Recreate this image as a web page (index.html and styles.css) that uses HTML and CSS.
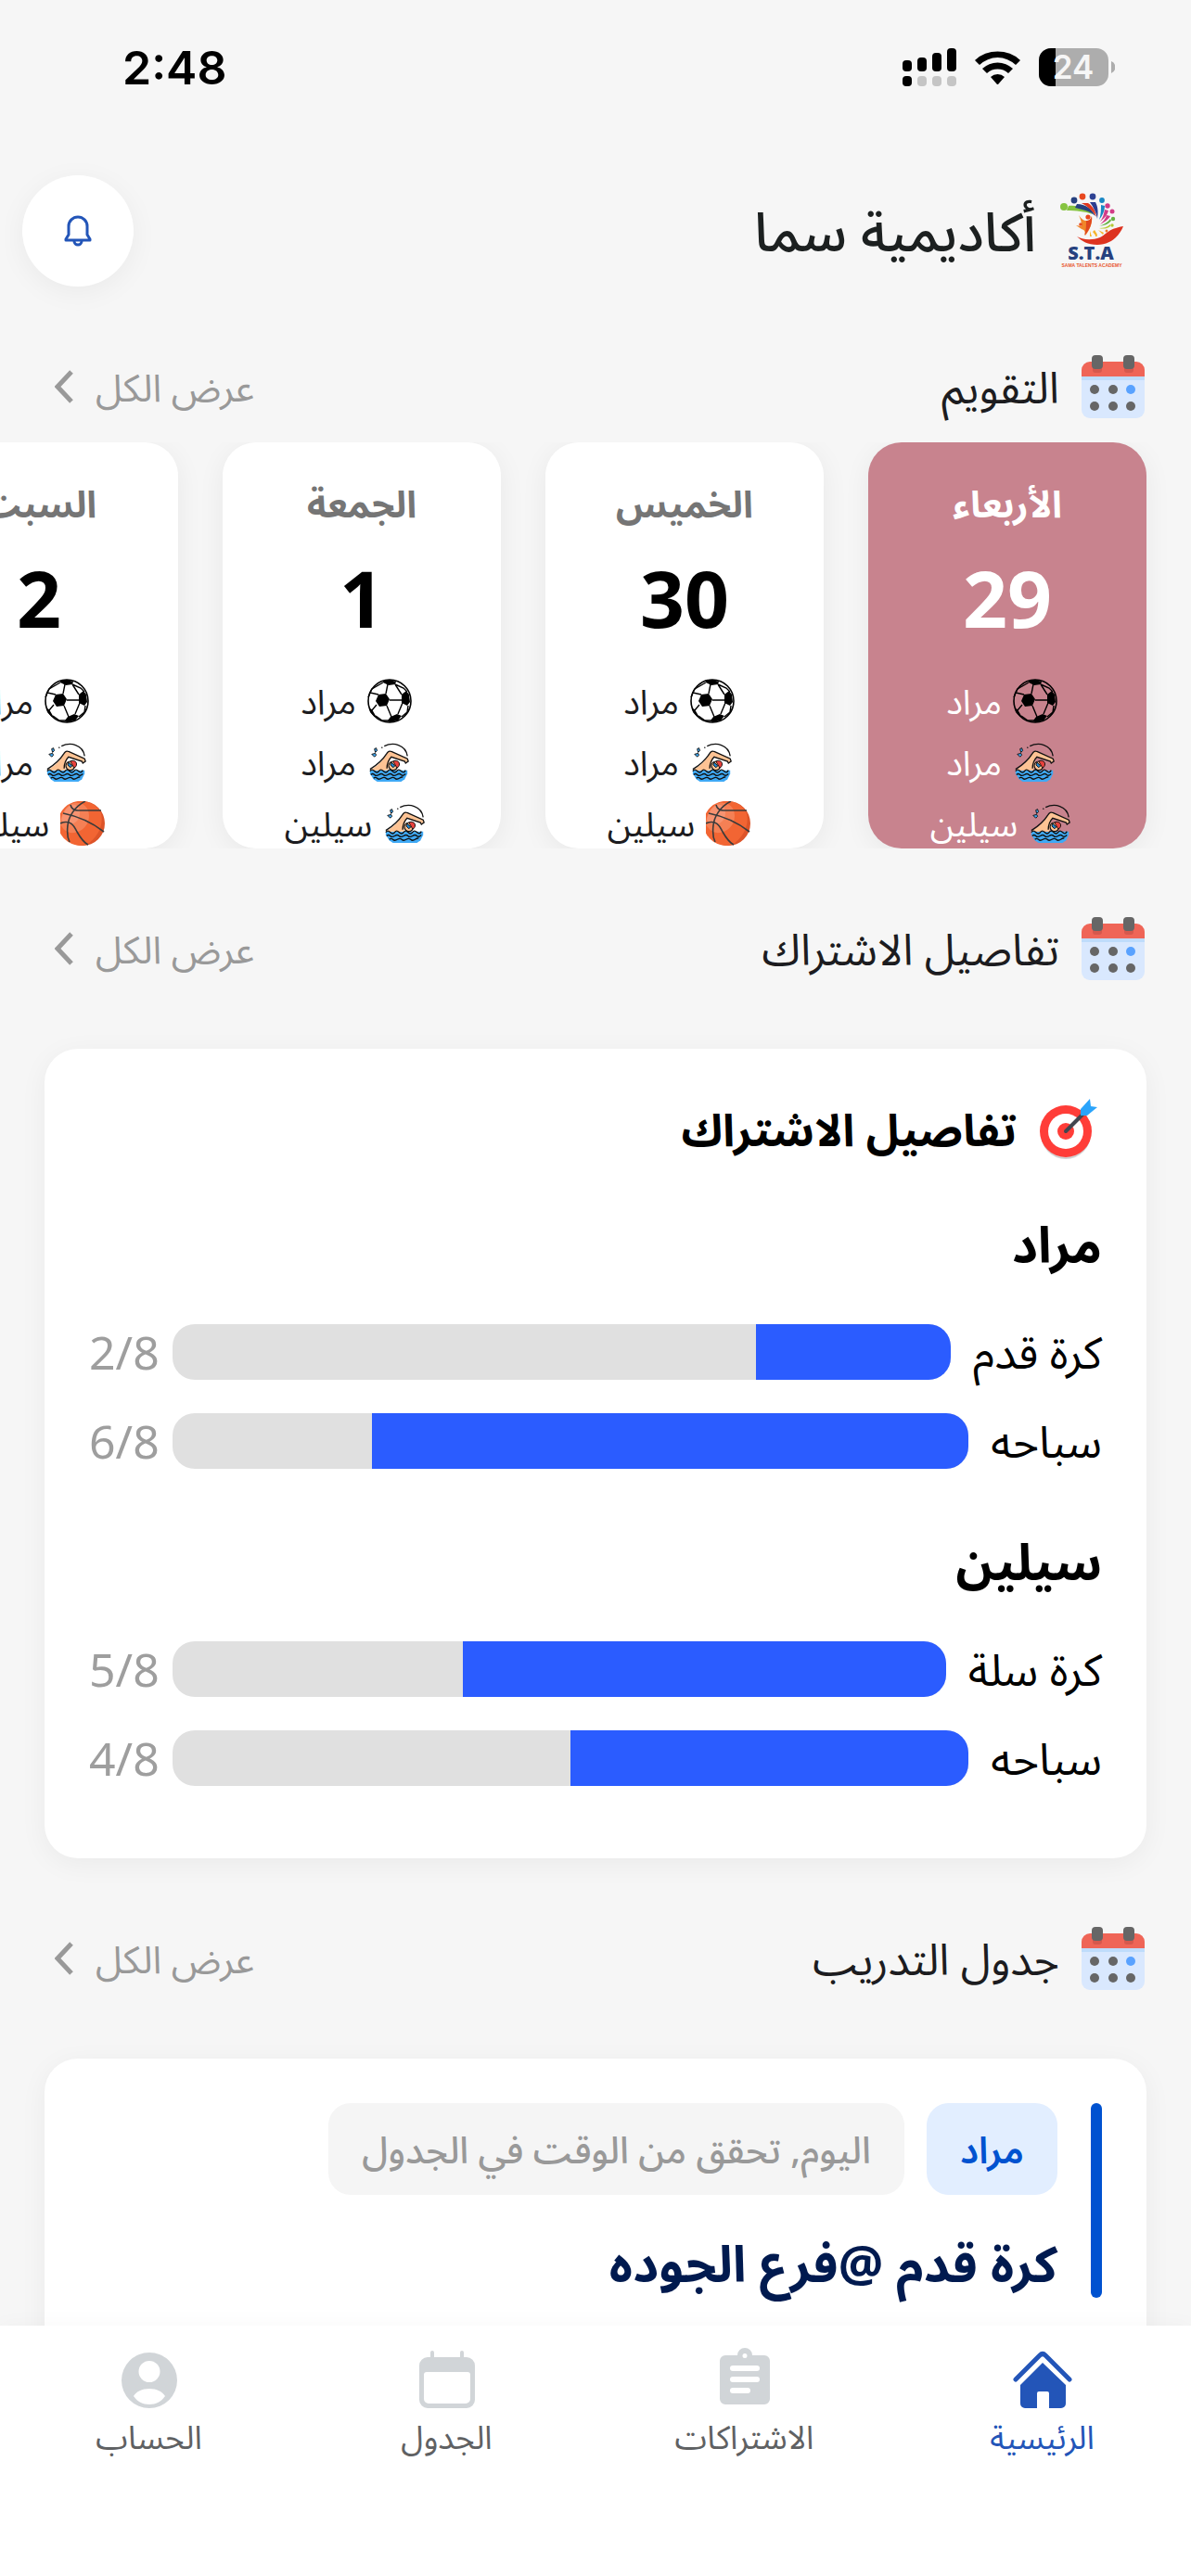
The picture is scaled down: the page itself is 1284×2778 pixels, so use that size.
FILE: index.html
```
<!DOCTYPE html>
<html lang="ar" dir="rtl">
<head>
    <meta charset="UTF-8">
    <meta name="viewport" content="width=device-width, initial-scale=1.0">
    <title>أكاديمية سما</title>
    <link rel="stylesheet" href="styles.css">
</head>
<body>
    <!-- Shared icons -->
    <svg class="sprite" aria-hidden="true">
        <symbol id="icon-calendar" viewBox="0 0 68 68">
            <path d="M0 16a9 9 0 0 1 9-9h50a9 9 0 0 1 9 9v10H0z" fill="#ef6557"/>
            <path d="M0 23h68v36a9 9 0 0 1-9 9H9a9 9 0 0 1-9-9z" fill="#d9e8fe"/>
            <path d="M0 23h68v4H0z" fill="#bfdcfb"/>
            <path d="M12 12h10v4a3 3 0 0 1-3 3h-4a3 3 0 0 1-3-3zM46 12h10v4a3 3 0 0 1-3 3h-4a3 3 0 0 1-3-3z" fill="#d6584d"/>
            <rect x="11" y="0" width="12" height="15" rx="4" fill="#666"/>
            <rect x="45" y="0" width="12" height="15" rx="4" fill="#666"/>
            <g fill="#666">
                <circle cx="14" cy="37" r="5"/>
                <circle cx="34" cy="37" r="5"/>
                <circle cx="14" cy="55" r="5"/>
                <circle cx="34" cy="55" r="5"/>
                <circle cx="53" cy="55" r="5"/>
            </g>
            <circle cx="53" cy="37" r="5" fill="#59a2ff"/>
        </symbol>
        <symbol id="icon-chevron" viewBox="0 0 20 36">
            <path d="M18 2 3 18l15 16" fill="none" stroke="currentColor" stroke-width="5"/>
        </symbol>
        <symbol id="icon-football" viewBox="0 0 48 48">
            <circle cx="24" cy="24" r="23" fill="none" stroke="#000" stroke-width="1.6"/>
            <path d="M12 17l8-1 4 6-3 7-8 1-4-6zM37 17l5-4 3 4 1 8-3 4-6-3zM25 41l7-3 5 2-4 5-9 2-2-2zM17 2l7-1 7 2-1 3-7 1-6-3zM2 32l3 1 4 7-1 1-5-5z"/>
            <path d="M20 16l2-10M12 17l-9-2 2-4 12-7M24 23l13 0M21 29l5 12M10 28l-5 6M37 17l-7-11M38 26l-5 12M30 6l9 4 4 4M9 40l7 5 7 0M1 20l2-5M44 29l-1 7-6 5" fill="none" stroke="#000" stroke-width="1.4"/>
        </symbol>
        <symbol id="icon-swim" viewBox="-1 -2 50 50">
            <path d="M2 32h42v4l-3 6-4 3H10l-4-3-4-6z" fill="#3fa9f5"/>
            <path d="M2 32c8-5 14-10 19-19 1-2 3-3 5-2l17 7 2 4-2 1-17-6c-4 6-2 11-4 15z" fill="#fdc394"/>
            <path d="M2 31c8-5 14-10 19-18 1-2 3-3 5-2l18 8 1 3-3 2-1-2-15-5c-4 4-5 9-5 13" fill="none" stroke="#111" stroke-width="1.4"/>
            <circle cx="28" cy="27" r="5" fill="#fdc394" stroke="#111" stroke-width="1.2"/>
            <path d="M28 22c3-2 7 0 7 3 0 2-1 4-3 4z" fill="#e9413c" stroke="#111" stroke-width="1"/>
            <path d="M26 23l4 4-2 2-3-3z" fill="#1e86d0" stroke="#111" stroke-width="1"/>
            <path d="M4 14l4-1 1 2-2 2zM7 8l1 4 2-2-1-3z" fill="#3fa9f5" stroke="#111" stroke-width="1"/>
            <path d="M18 5c10-5 24-2 26 11M15 7l1-1" fill="none" stroke="#111" stroke-width="1.4"/>
            <path d="M2 33q2-3 5 0t5 0 5 0 5 0 5 0 5 0 5 0 5-1M3 37q2-2 4 0t5 0 5 0 5 0 5 0 5 0 5 0 5-1M6 41q2-2 4 0t5 0 5 0 5 0 5 0 5 0 4-1" fill="none" stroke="#111" stroke-width="1.4"/>
        </symbol>
        <symbol id="icon-basketball" viewBox="0 0 48 48">
            <circle cx="24" cy="24" r="24" fill="#dd5429"/>
            <path d="M24 0a24 24 0 0 1 20 13c3 13-4 27-16 34A24 24 0 1 1 24 0z" fill="#f26533"/>
            <path d="M15 2c9-1 16 4 16 14 0 9-7 17-16 18C7 35 3 30 0 25 0 13 7 4 15 2z" fill="#f58055"/>
            <path d="M12 4c6-1 9 3 9 9s-4 11-10 12c-5 0-8-2-10-5C3 12 6 7 12 4z" fill="#f79371"/>
            <path d="M27 0C15 6 9 17 8 26c-1 8 0 14 2 18M11 4c1 4 4 6 8 6h25M3 13c15 3 30 9 44 20M0 24c11-5 15 3 18 9 4 7 8 12 12 14" fill="none" stroke="#3b3b3b" stroke-width="1.6"/>
        </symbol>
    </svg>

    <div class="app">
        <div class="status-bar" dir="ltr">
            <span class="status-time">2:48</span>
            <div class="status-icons">
                <svg width="58" height="41" viewBox="0 0 58 41">
                    <rect x="0" y="13" width="10" height="12" rx="4"/>
                    <rect x="16" y="10" width="10" height="15" rx="4"/>
                    <rect x="32" y="5" width="10" height="20" rx="4"/>
                    <rect x="48" y="0" width="10" height="25" rx="4"/>
                    <rect x="0" y="30" width="10" height="11" rx="4"/>
                    <g fill="#c5c5c5">
                        <rect x="16" y="30" width="10" height="11" rx="4"/>
                        <rect x="32" y="30" width="10" height="11" rx="4"/>
                        <rect x="48" y="30" width="10" height="11" rx="4"/>
                    </g>
                </svg>
                <svg width="51" height="37" viewBox="0 0 51 37">
                    <path d="M1 11a36 36 0 0 1 49 0l-5 5a28 28 0 0 0-39 0z"/>
                    <path d="M9 20a24 24 0 0 1 33 0l-5 5a17 17 0 0 0-23 0z"/>
                    <path d="M18 29a11 11 0 0 1 15 0l-7 8h-1z"/>
                </svg>
                <svg width="82" height="41" viewBox="0 0 82 41">
                    <rect width="75" height="41" rx="13" fill="#adadad"/>
                    <path d="M18 0v41h-5A13 13 0 0 1 0 28V13A13 13 0 0 1 13 0z"/>
                    <path d="M78 14a7 7 0 0 1 0 13z" fill="#adadad"/>
                    <text class="battery-text" x="37" y="33" text-anchor="middle">24</text>
                </svg>
            </div>
        </div>

        <header class="header">
            <div class="brand">
                <svg class="brand-logo" viewBox="0 0 72 82" role="img" aria-label="S.T.A">
                    <path d="M11 14c11-1 20 3 26 9-9-3-17-4-28-4z" fill="#86c440"/>
                    <path d="M20 12c9 0 16 5 20 13-7-6-14-7-22-9z" fill="#26417f"/>
                    <path d="M25 11l7 0c6 4 8 9 9 15-4-7-9-11-16-15z" fill="#e0381f"/>
                    <path d="M34 10h6c3 6 3 11 2 18-1-7-4-12-8-18z" fill="#2c3d8f"/>
                    <path d="M46 13l4 1c0 5-2 10-6 15 2-6 2-11 2-16z" fill="#1a87c4"/>
                    <path d="M50 18l4 1c-1 5-5 9-9 12 3-4 4-8 5-13zM52 24l4 1c-2 4-7 7-11 9 3-3 6-6 7-10z" fill="#d23b87"/>
                    <path d="M56 28l1 2c-3 4-8 5-13 6 5-2 9-4 12-8z" fill="#65b245"/>
                    <path d="M56 34v2c-4 3-8 3-12 2 5 0 8-1 12-4z" fill="#b5c832"/>
                    <path d="M37 42l2-2 3 5-1 2zM34 41l2 6-2 0zM43 40l6 3-1 2zM39 41l3 6h-2z" fill="#f6b52b"/>
                    <circle cx="6" cy="15" r="4" fill="#86c440"/>
                    <circle cx="17" cy="8" r="3.4" fill="#26417f"/>
                    <circle cx="26" cy="4" r="3.4" fill="#e8481f"/>
                    <circle cx="37" cy="4" r="3.4" fill="#2e4293"/>
                    <circle cx="47" cy="8" r="2.9" fill="#1a87c4"/>
                    <circle cx="53" cy="14" r="2.7" fill="#d23b87"/>
                    <circle cx="58" cy="20" r="2.5" fill="#d23b87"/>
                    <circle cx="59" cy="28" r="2.2" fill="#65b245"/>
                    <circle cx="58" cy="35" r="1.7" fill="#b5c832"/>
                    <circle cx="52" cy="41" r="1.5" fill="#f0762b"/>
                    <path d="M22 24c3 4 5 6 8 6 3 0 5-1 6-5 1 7-2 15-7 21 0-5-1-6-4-7l-6-4 6 1c0-4-1-8-3-12z" fill="#f0862a"/>
                    <path d="M28 46c2-6 2-11 2-16 3 0 5-1 6-5 1 8-3 16-8 21z" fill="#e0471f"/>
                    <circle cx="32" cy="26" r="2.6" fill="#e8481f"/>
                    <circle cx="24" cy="34" r="1.8" fill="#e8481f"/>
                    <path d="M20 47c5 3 15 5 25 1 8-4 8-9 25-12-5 12-15 20-28 20-10 0-17-4-22-9z" fill="#dd3320"/>
                    <text class="logo-name" x="35" y="72" text-anchor="middle">S.T.A</text>
                    <text class="logo-sub" x="36" y="80" text-anchor="middle">SAMA TALENTS ACADEMY</text>
                </svg>
                <h1>أكاديمية سما</h1>
            </div>
            <button class="bell-btn" type="button" aria-label="الإشعارات">
                <svg width="32" height="34" viewBox="0 0 32 34" fill="none" stroke="currentColor" stroke-width="3" stroke-linejoin="round">
                    <path d="M3 27V26l3-5v-9a10 10 0 0 1 20 0v9l3 5v1z"/>
                    <path d="M12 28a4 4 0 0 0 8 0"/>
                </svg>
            </button>
        </header>

        <main>
            <section>
                <div class="section-head">
                    <svg class="section-icon"><use href="#icon-calendar"/></svg>
                    <h2>التقويم</h2>
                    <a class="view-all" href="#">عرض الكل <svg class="chevron"><use href="#icon-chevron"/></svg></a>
                </div>
                <div class="days">
                    <article class="day-card active">
                        <h3>الأربعاء</h3>
                        <div class="day-number">29</div>
                        <ul>
                            <li><svg><use href="#icon-football"/></svg>مراد</li>
                            <li><svg><use href="#icon-swim"/></svg>مراد</li>
                            <li><svg><use href="#icon-swim"/></svg>سيلين</li>
                        </ul>
                    </article>
                    <article class="day-card">
                        <h3>الخميس</h3>
                        <div class="day-number">30</div>
                        <ul>
                            <li><svg><use href="#icon-football"/></svg>مراد</li>
                            <li><svg><use href="#icon-swim"/></svg>مراد</li>
                            <li><svg><use href="#icon-basketball"/></svg>سيلين</li>
                        </ul>
                    </article>
                    <article class="day-card">
                        <h3>الجمعة</h3>
                        <div class="day-number">1</div>
                        <ul>
                            <li><svg><use href="#icon-football"/></svg>مراد</li>
                            <li><svg><use href="#icon-swim"/></svg>مراد</li>
                            <li><svg><use href="#icon-swim"/></svg>سيلين</li>
                        </ul>
                    </article>
                    <article class="day-card">
                        <h3>السبت</h3>
                        <div class="day-number">2</div>
                        <ul>
                            <li><svg><use href="#icon-football"/></svg>مراد</li>
                            <li><svg><use href="#icon-swim"/></svg>مراد</li>
                            <li><svg><use href="#icon-basketball"/></svg>سيلين</li>
                        </ul>
                    </article>
                </div>
            </section>

            <section>
                <div class="section-head">
                    <svg class="section-icon"><use href="#icon-calendar"/></svg>
                    <h2>تفاصيل الاشتراك</h2>
                    <a class="view-all" href="#">عرض الكل <svg class="chevron"><use href="#icon-chevron"/></svg></a>
                </div>
                <div class="card details">
                    <div class="details-title">
                        <svg class="section-icon" viewBox="0 0 68 68">
                            <circle cx="29" cy="39" r="27" fill="#000" opacity=".18"/>
                            <circle cx="29" cy="36" r="28" fill="#ff3d38"/>
                            <circle cx="29" cy="36" r="19" fill="#fff"/>
                            <circle cx="29" cy="36" r="9" fill="#ff3d38"/>
                            <path d="M29 36l23-23" stroke="#42464f" stroke-width="4" stroke-linecap="round"/>
                            <path d="M45 19v-7L55 1l1 8 7 1-11 9z" fill="#2aa4fb"/>
                        </svg>
                        <h3>تفاصيل الاشتراك</h3>
                    </div>
                    <div class="player">
                        <h4>مراد</h4>
                        <div class="progress-row">
                            <span class="sport">كرة قدم</span>
                            <div class="bar"><div class="bar-fill" style="width: 25%"></div></div>
                            <span class="count" dir="ltr">2/8</span>
                        </div>
                        <div class="progress-row">
                            <span class="sport">سباحه</span>
                            <div class="bar"><div class="bar-fill" style="width: 75%"></div></div>
                            <span class="count" dir="ltr">6/8</span>
                        </div>
                    </div>
                    <div class="player">
                        <h4>سيلين</h4>
                        <div class="progress-row">
                            <span class="sport">كرة سلة</span>
                            <div class="bar"><div class="bar-fill" style="width: 62.5%"></div></div>
                            <span class="count" dir="ltr">5/8</span>
                        </div>
                        <div class="progress-row">
                            <span class="sport">سباحه</span>
                            <div class="bar"><div class="bar-fill" style="width: 50%"></div></div>
                            <span class="count" dir="ltr">4/8</span>
                        </div>
                    </div>
                </div>
            </section>

            <section>
                <div class="section-head">
                    <svg class="section-icon"><use href="#icon-calendar"/></svg>
                    <h2>جدول التدريب</h2>
                    <a class="view-all" href="#">عرض الكل <svg class="chevron"><use href="#icon-chevron"/></svg></a>
                </div>
                <div class="card training">
                    <div class="training-item">
                        <div class="chips">
                            <span class="chip chip-player">مراد</span>
                            <span class="chip">اليوم, تحقق من الوقت في الجدول</span>
                        </div>
                        <h3>كرة قدم @فرع الجوده</h3>
                    </div>
                </div>
            </section>
        </main>

        <nav class="tab-bar">
            <a class="tab active" href="#">
                <svg viewBox="0 0 68 68">
                    <path d="M5 34 31 8q3-3 6 0l26 26" fill="none" stroke="currentColor" stroke-width="5" stroke-linecap="round"/>
                    <path d="M34 16 59 40v20a5 5 0 0 1-5 5H41V49a2 2 0 0 0-2-2H30a2 2 0 0 0-2 2v16H15a5 5 0 0 1-5-5V40z"/>
                </svg>
                الرئيسية
            </a>
            <a class="tab" href="#">
                <svg viewBox="0 0 68 68">
                    <path fill-rule="evenodd" d="M13 8h13a8 8 0 0 1 16 0h13a6 6 0 0 1 6 6v41a6 6 0 0 1-6 6H13a6 6 0 0 1-6-6V14a6 6 0 0 1 6-6zM34 6a2 2 0 1 0 0 5 2 2 0 0 0 0-5zM21 19a3 3 0 0 0 0 6h26a3 3 0 0 0 0-6zM21 31a3 3 0 0 0 0 6h26a3 3 0 0 0 0-6zM21 43a3 3 0 0 0 0 6h16a3 3 0 0 0 0-6z"/>
                </svg>
                الاشتراكات
            </a>
            <a class="tab" href="#">
                <svg viewBox="0 0 68 68">
                    <path fill-rule="evenodd" d="M16 5a2 2 0 0 1 4 0v5h28V5a2 2 0 0 1 4 0v5h3a9 9 0 0 1 9 9v37a9 9 0 0 1-9 9H13a9 9 0 0 1-9-9V19a9 9 0 0 1 9-9h3zM12 26a3 3 0 0 0-3 3v26a5 5 0 0 0 5 5h40a5 5 0 0 0 5-5V29a3 3 0 0 0-3-3z"/>
                </svg>
                الجدول
            </a>
            <a class="tab" href="#">
                <svg viewBox="0 0 68 68">
                    <path fill-rule="evenodd" d="M34 5a30 30 0 1 0 0 60 30 30 0 0 0 0-60zM34 14a11 11 0 1 1 0 23 11 11 0 0 1 0-23zM34 44c8 0 14 3 17 8-4 6-10 9-17 9s-13-3-17-9c3-5 9-8 17-8z"/>
                </svg>
                الحساب
            </a>
        </nav>
    </div>
</body>
</html>
```
FILE: styles.css
```
* {
    box-sizing: border-box;
    margin: 0;
    padding: 0;
}

body {
    font-family: "Noto Sans", "Noto Sans Arabic", "DejaVu Sans", sans-serif;
    background: #f6f6f6;
    color: #1c1c20;
}

a {
    color: inherit;
    text-decoration: none;
}

svg {
    flex-shrink: 0;
}

.sprite {
    display: none;
}

.app {
    display: flex;
    flex-direction: column;
    height: 100vh;
}

/* Status bar */
.status-bar {
    display: flex;
    align-items: center;
    justify-content: space-between;
    height: 145px;
    padding: 0 82px 0 132px;
    flex-shrink: 0;
}

.status-time {
    font-family: Inter, sans-serif;
    font-size: 50px;
    font-weight: 600;
    color: #000;
}

.status-icons {
    display: flex;
    align-items: center;
    gap: 19px;
}

.battery-text {
    font-family: Inter, sans-serif;
    font-size: 35px;
    font-weight: 600;
    fill: #f6f6f6;
}

/* Header */
.header {
    display: flex;
    align-items: center;
    justify-content: space-between;
    padding: 44px 71px 0 24px;
    flex-shrink: 0;
}

.brand {
    display: flex;
    align-items: center;
    gap: 24px;
}

.brand-logo {
    width: 72px;
    height: 82px;
}

.logo-name {
    font-family: "Open Sans", sans-serif;
    font-size: 20px;
    font-weight: 800;
    fill: #26417f;
}

.logo-sub {
    font-family: "Liberation Sans", sans-serif;
    font-size: 5px;
    font-weight: 700;
    fill: #e8562f;
}

.brand h1 {
    font-size: 58px;
    font-weight: 500;
    line-height: 84px;
    color: #1c2020;
}

.bell-btn {
    display: flex;
    align-items: center;
    justify-content: center;
    width: 120px;
    height: 120px;
    border: none;
    border-radius: 50%;
    background: #fff;
    color: #2355b8;
    box-shadow: 0 6px 30px rgba(0, 0, 0, 0.05);
}

/* Sections */
main {
    flex: 1;
    min-height: 0;
    overflow: hidden;
}

.section-head {
    display: flex;
    align-items: center;
    gap: 24px;
    height: 72px;
    margin: 72px 50px;
}

.section-icon {
    width: 68px;
    height: 68px;
}

.section-head h2 {
    font-size: 47px;
    font-weight: 400;
    line-height: 72px;
}

.view-all {
    display: flex;
    align-items: center;
    gap: 24px;
    margin-right: auto;
    padding-left: 9px;
    font-size: 41px;
    line-height: 72px;
    color: #999;
}

.chevron {
    width: 20px;
    height: 36px;
}

.card {
    margin: 0 48px;
    padding: 48px;
    border-radius: 36px;
    background: #fff;
    box-shadow: 0 6px 30px rgba(0, 0, 0, 0.05);
}

/* Calendar strip */
.days {
    display: flex;
    gap: 48px;
    margin-top: -48px;
    padding: 0 48px;
    overflow: hidden;
}

.day-card {
    flex: 0 0 300px;
    padding: 30px 24px 3px;
    border-radius: 36px;
    background: #fff;
    text-align: center;
    box-shadow: 0 6px 30px rgba(0, 0, 0, 0.06);
}

.day-card h3 {
    font-size: 40px;
    font-weight: 700;
    line-height: 72px;
    color: #757575;
}

.day-number {
    margin: 18px 0 39px;
    font-size: 84px;
    font-weight: 700;
    line-height: 96px;
    color: #000;
}

.day-card ul {
    display: flex;
    flex-direction: column;
    gap: 18px;
    padding-right: 12px;
    list-style: none;
}

.day-card li {
    display: flex;
    align-items: center;
    justify-content: center;
    gap: 12px;
    font-size: 37px;
    line-height: 48px;
}

.day-card li svg {
    width: 48px;
    height: 48px;
}

.day-card.active {
    background: #c8838e;
}

.day-card.active h3,
.day-card.active .day-number,
.day-card.active li {
    color: #fff;
}

/* Subscription details */
.details {
    padding-bottom: 78px;
    color: #000;
}

.details-title {
    display: flex;
    align-items: center;
    gap: 24px;
    height: 78px;
    margin-bottom: 42px;
}

.details-title h3 {
    font-size: 48px;
    font-weight: 700;
    line-height: 78px;
}

.player + .player {
    margin-top: 57px;
}

.player h4 {
    margin-bottom: 45px;
    font-size: 54px;
    font-weight: 700;
    line-height: 84px;
}

.progress-row {
    display: flex;
    align-items: center;
    height: 60px;
}

.progress-row + .progress-row {
    margin-top: 36px;
}

.sport {
    margin-left: 24px;
    font-size: 48px;
    line-height: 60px;
}

.bar {
    flex: 1;
    height: 60px;
    border-radius: 24px;
    background: #e0e0e0;
    overflow: hidden;
}

.bar-fill {
    height: 100%;
    background: #2b5cff;
}

.count {
    width: 90px;
    font-size: 50px;
    line-height: 60px;
    color: #9e9e9e;
}

/* Training schedule */
.training {
    padding-bottom: 96px;
}

.training-item {
    position: relative;
    padding-right: 48px;
}

.training-item::before {
    content: "";
    position: absolute;
    top: 0;
    right: 0;
    bottom: 0;
    width: 12px;
    border-radius: 6px;
    background: #0052d0;
}

.chips {
    display: flex;
    gap: 24px;
}

.chip {
    padding: 0 36px;
    border-radius: 24px;
    background: #f5f5f5;
    font-size: 40px;
    font-weight: 500;
    line-height: 99px;
    white-space: nowrap;
    color: #999;
}

.chip-player {
    background: #e2eeff;
    color: #0052d0;
    font-weight: 600;
}

.training-item h3 {
    margin-top: 36px;
    font-size: 54px;
    font-weight: 700;
    line-height: 75px;
    color: #001a4f;
}

/* Bottom tabs */
.tab-bar {
    position: relative;
    display: flex;
    height: 270px;
    padding-top: 24px;
    flex-shrink: 0;
    background: #fff;
    box-shadow: 0 0 24px rgba(0, 0, 0, 0.03);
}

.tab {
    flex: 1;
    display: flex;
    flex-direction: column;
    align-items: center;
    gap: 4px;
    font-size: 35px;
    line-height: 48px;
    color: #5f6163;
}

.tab svg {
    width: 68px;
    height: 68px;
    fill: #d1d5d8;
}

.tab.active {
    color: #2355b8;
}

.tab.active svg {
    fill: #2355b8;
}
```
